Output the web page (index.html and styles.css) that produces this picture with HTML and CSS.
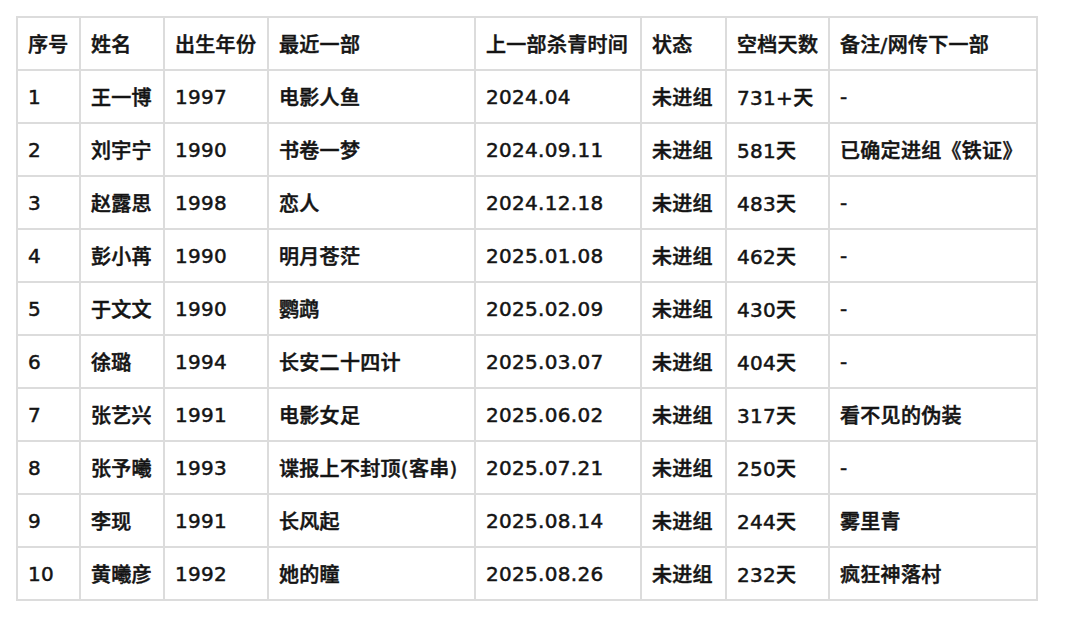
FILE: index.html
```html
<!DOCTYPE html>
<html lang="zh">
<head>
<meta charset="utf-8">
<link rel="stylesheet" href="styles.css">
</head>
<body>
<table class="gap-table">
<colgroup>
<col class="c1"><col class="c2"><col class="c3"><col class="c4"><col class="c5"><col class="c6"><col class="c7"><col class="c8">
</colgroup>
<thead>
<tr><th>序号</th><th>姓名</th><th>出生年份</th><th>最近一部</th><th>上一部杀青时间</th><th>状态</th><th>空档天数</th><th>备注/网传下一部</th></tr>
</thead>
<tbody>
<tr><td>1</td><td>王一博</td><td>1997</td><td>电影人鱼</td><td>2024.04</td><td>未进组</td><td>731+天</td><td>-</td></tr>
<tr><td>2</td><td>刘宇宁</td><td>1990</td><td>书卷一梦</td><td>2024.09.11</td><td>未进组</td><td>581天</td><td>已确定进组《铁证》</td></tr>
<tr><td>3</td><td>赵露思</td><td>1998</td><td>恋人</td><td>2024.12.18</td><td>未进组</td><td>483天</td><td>-</td></tr>
<tr><td>4</td><td>彭小苒</td><td>1990</td><td>明月苍茫</td><td>2025.01.08</td><td>未进组</td><td>462天</td><td>-</td></tr>
<tr><td>5</td><td>于文文</td><td>1990</td><td>鹦鹉</td><td>2025.02.09</td><td>未进组</td><td>430天</td><td>-</td></tr>
<tr><td>6</td><td>徐璐</td><td>1994</td><td>长安二十四计</td><td>2025.03.07</td><td>未进组</td><td>404天</td><td>-</td></tr>
<tr><td>7</td><td>张艺兴</td><td>1991</td><td>电影女足</td><td>2025.06.02</td><td>未进组</td><td>317天</td><td>看不见的伪装</td></tr>
<tr><td>8</td><td>张予曦</td><td>1993</td><td>谍报上不封顶(客串)</td><td>2025.07.21</td><td>未进组</td><td>250天</td><td>-</td></tr>
<tr><td>9</td><td>李现</td><td>1991</td><td>长风起</td><td>2025.08.14</td><td>未进组</td><td>244天</td><td>雾里青</td></tr>
<tr><td>10</td><td>黄曦彦</td><td>1992</td><td>她的瞳</td><td>2025.08.26</td><td>未进组</td><td>232天</td><td>疯狂神落村</td></tr>
</tbody>
</table>
</body>
</html>
```
FILE: styles.css
```css
html, body {
  margin: 0;
  padding: 0;
  background: #ffffff;
}
body {
  padding: 16px 0 0 16px;
  font-family: "DejaVu Sans", "Noto Sans CJK SC", sans-serif;
  font-size: 20px;
  color: #141414;
}
.gap-table {
  border-collapse: collapse;
  table-layout: fixed;
  width: 1020px;
}
.c1 { width: 63px; }
.c2 { width: 84px; }
.c3 { width: 104px; }
.c4 { width: 207px; }
.c5 { width: 166px; }
.c6 { width: 85px; }
.c7 { width: 103px; }
.c8 { width: 208px; }
.gap-table th,
.gap-table td {
  border: 2px solid #dcdcdc;
  height: 53px;
  padding: 0 0 0 10px;
  text-align: left;
  vertical-align: middle;
  font-weight: 500;
  letter-spacing: 0.3px;
  -webkit-text-stroke: 0.5px #141414;
  white-space: nowrap;
  overflow: hidden;
  box-sizing: border-box;
}
```
